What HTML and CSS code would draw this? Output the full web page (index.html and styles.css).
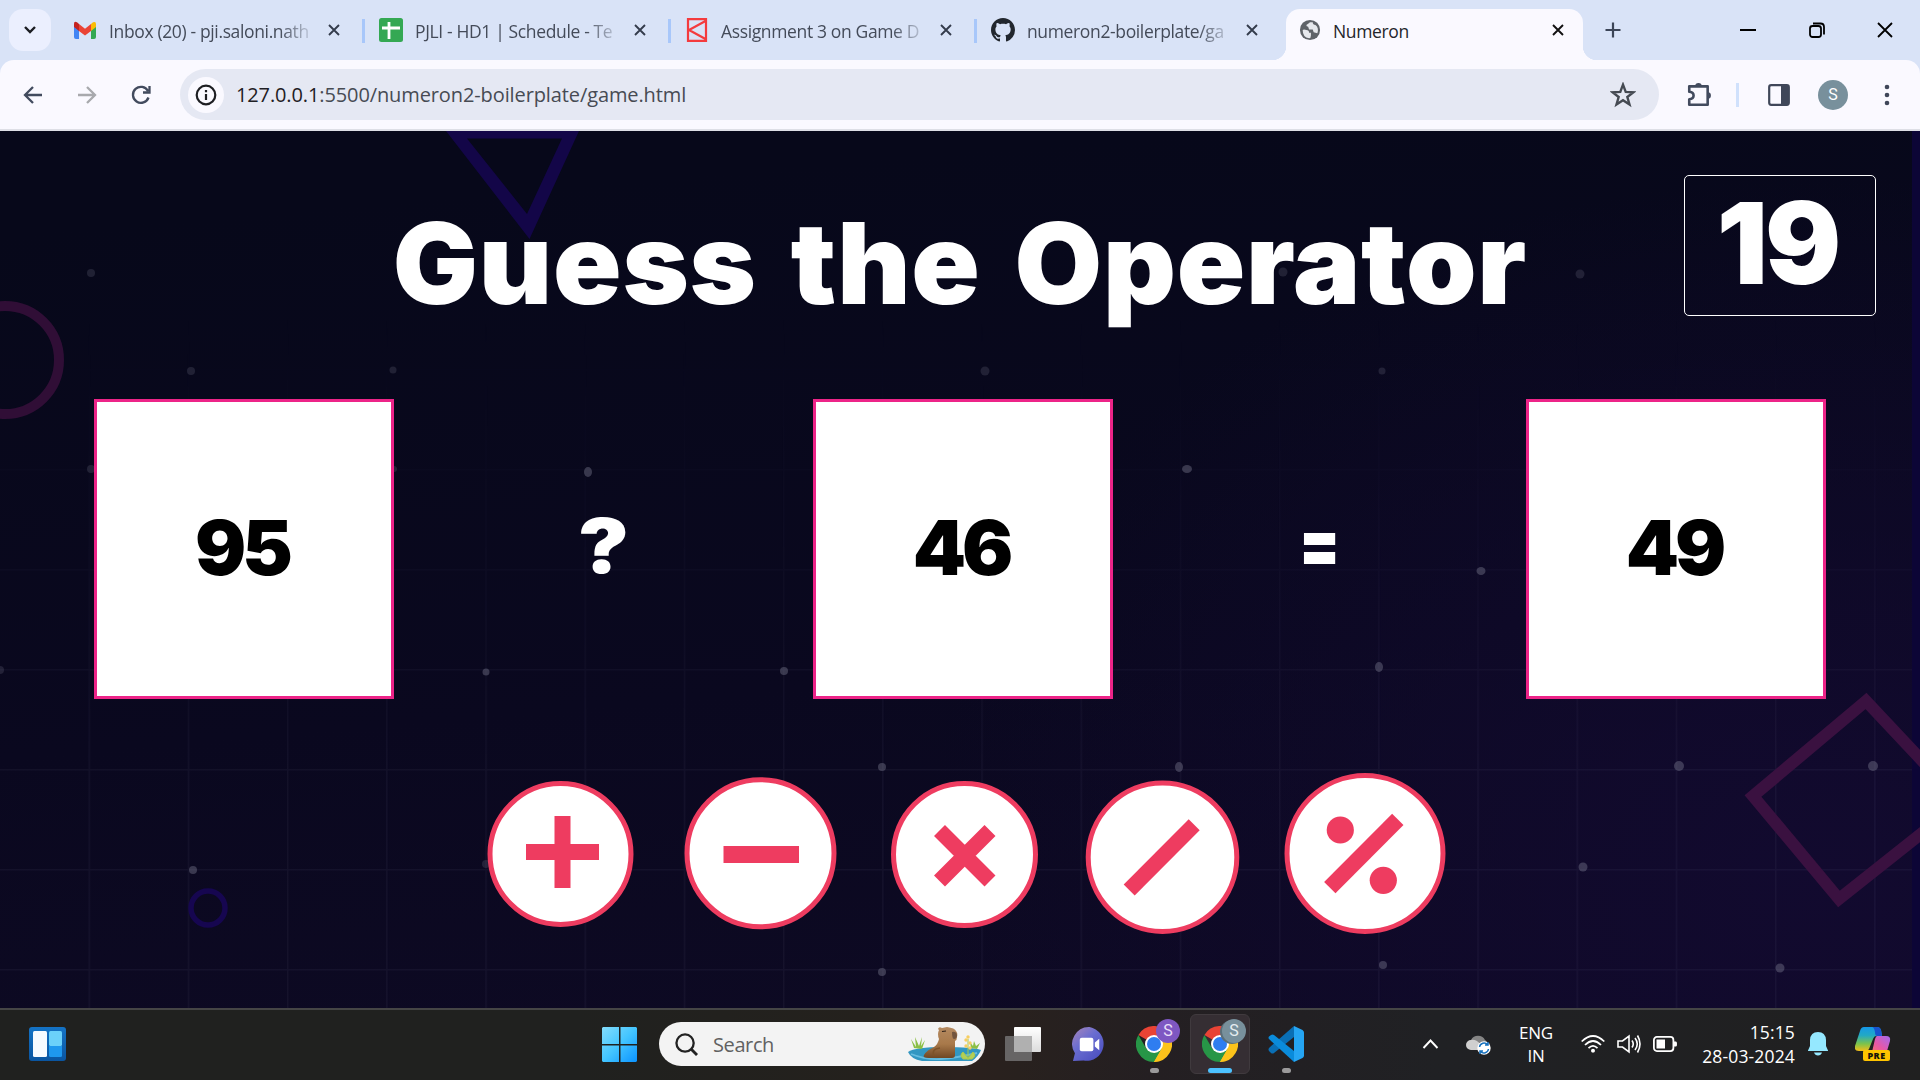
FILE: index.html
```html
<!DOCTYPE html>
<html lang="en">
<head>
<meta charset="utf-8">
<title>Numeron</title>
<link rel="stylesheet" href="styles.css">
</head>
<body>
<div class="screen">
  <header class="tabstrip">
    <button class="tab-search"><svg width="14" height="10" viewBox="0 0 14 10"><path d="M2 2l5 5 5-5" fill="none" stroke="#1b1d22" stroke-width="2.4"/></svg></button>
    <nav class="tabs">
      <div class="tab">
        <svg class="favicon" viewBox="0 0 24 24"><path d="M1 6v13q0 2 2 2h3V10z" fill="#4285f4"/><path d="M23 6v13q0 2-2 2h-3V10z" fill="#34a853"/><path d="M18 6l2-1.700q3-1.300 3 2V9l-5 4z" fill="#fbbc04"/><path d="M1 6q0-3.300 3-1.700L6 6v7L1 9z" fill="#c5221f"/><path d="M6 6l6 4.700L18 6v7l-6 4.500L6 13z" fill="#ea4335"/></svg>
        <span class="tab-title">Inbox (20) - pji.saloni.nath</span><svg class="close" viewBox="0 0 12 12"><path d="M1 1l10 10M11 1L1 11"/></svg>
      </div>
      <div class="tab">
        <svg class="favicon" viewBox="0 0 24 24"><rect width="24" height="24" rx="2.500" fill="#34a853"/><path d="M10 4v17M3 10h18" stroke="#fff" stroke-width="2.800"/></svg>
        <span class="tab-title">PJLI - HD1 | Schedule - Te</span><svg class="close" viewBox="0 0 12 12"><path d="M1 1l10 10M11 1L1 11"/></svg>
      </div>
      <div class="tab">
        <svg class="favicon" viewBox="0 0 24 24"><path d="M3 1.200h18v21.600H3zM20.500 3L4 12l16.500 9" fill="none" stroke="#f43b3e" stroke-width="2.200"/></svg>
        <span class="tab-title">Assignment 3 on Game D</span><svg class="close" viewBox="0 0 12 12"><path d="M1 1l10 10M11 1L1 11"/></svg>
      </div>
      <div class="tab last-idle">
        <svg class="favicon" viewBox="0 0 16 16"><path fill="#22272e" d="M8 0C3.580 0 0 3.580 0 8c0 3.540 2.290 6.530 5.470 7.590.4.070.55-.17.55-.38 0-.19-.01-.82-.01-1.490-2.010.37-2.530-.49-2.690-.94-.09-.23-.48-.94-.82-1.130-.28-.15-.68-.52-.01-.53.63-.01 1.080.58 1.230.82.72 1.210 1.870.87 2.330.66.070-.52.28-.87.51-1.070-1.780-.2-3.640-.89-3.640-3.950 0-.87.31-1.590.82-2.150-.08-.2-.36-1.020.08-2.120 0 0 .67-.21 2.200.82.64-.18 1.320-.27 2-.27s1.360.09 2 .27c1.530-1.040 2.200-.82 2.200-.82.44 1.100.16 1.920.08 2.120.51.56.82 1.270.82 2.150 0 3.070-1.870 3.750-3.650 3.950.29.25.54.73.54 1.480 0 1.070-.01 1.930-.01 2.200 0 .21.15.46.55.38A8.010 8.010 0 0 0 16 8c0-4.420-3.580-8-8-8z"/></svg>
        <span class="tab-title">numeron2-boilerplate/ga</span><svg class="close" viewBox="0 0 12 12"><path d="M1 1l10 10M11 1L1 11"/></svg>
      </div>
      <div class="tab active">
        <svg class="favicon globe" viewBox="0 0 24 24"><circle cx="12" cy="12" r="11" fill="#5f6368"/><path d="M4 12q1-1 4 0 3 0 3 3h2v3q0 3-2 3Q4 20 4 12zM12 3.500q-2 2-4 3 0 2 2 2l1 3h4l1 3 4 1q2-6-2-9-3 0-3-3z" fill="#e6e8ec"/></svg>
        <span class="tab-title">Numeron</span><svg class="close" viewBox="0 0 12 12"><path d="M1 1l10 10M11 1L1 11"/></svg>
      </div>
    </nav>
    <svg class="plus" viewBox="0 0 16 16"><path d="M8 .5v15M.5 8h15" stroke="#3c4557" stroke-width="2.200"/></svg>
    <div class="window-controls">
      <svg viewBox="0 0 16 16"><path d="M0 8h16" stroke="#000" stroke-width="2"/></svg>
      <svg viewBox="0 0 16 16" fill="none" stroke="#000" stroke-width="1.800"><rect x="1" y="4" width="11" height="11" rx="2.500"/><path d="M4 1.500h7.500Q15 1.500 15 5v7.500"/></svg>
      <svg viewBox="0 0 16 16"><path d="M1 1l14 14M15 1L1 15" stroke="#000" stroke-width="1.800"/></svg>
    </div>
  </header>

  <div class="toolbar">
    <div class="nav-buttons">
      <svg viewBox="0 0 20 20" fill="none" stroke="#424b5e" stroke-width="2.300"><path d="M19 10H2M10 2l-8 8 8 8"/></svg>
      <svg viewBox="0 0 20 20" fill="none" stroke="#a8a9ad" stroke-width="2.300"><path d="M1 10h17M10 2l8 8-8 8"/></svg>
      <svg viewBox="0 0 20 20" fill="none" stroke="#424b5e" stroke-width="2.300"><path d="M17.500 12.500A8 8 0 1 1 17 6M18.500 1v6.500H12"/></svg>
    </div>
    <div class="omnibox">
      <span class="site-info"><svg viewBox="0 0 22 22"><circle cx="11" cy="11" r="9.300" fill="none" stroke="#1d1e22" stroke-width="2.200"/><path d="M11 10v6M11 6v2.200" stroke="#1d1e22" stroke-width="2.200"/></svg></span>
      <span class="url"><b>127.0.0.1</b>:5500/numeron2-boilerplate/game.html</span>
      <svg class="star" viewBox="0 0 24 24"><path d="M12 2.500l2.500 6.700 7.200.3-5.700 4.400 2 6.900-6-4-6 4 2-6.900L2.300 9.500l7.200-.3z" fill="none" stroke="#454a52" stroke-width="2.200"/></svg>
    </div>
    <div class="actions">
      <svg class="puzzle" viewBox="0 0 24 24"><path d="M3 4h17v17H3v-5q4-.5 4-3.500T3 9z" fill="none" stroke="#424b5e" stroke-width="2.400" stroke-linejoin="round"/><path d="M8.500 4a3 3 0 0 1 6 0zM20 9.500a3 3 0 0 1 0 6z" fill="#424b5e"/></svg>
      <i class="divider"></i>
      <svg class="panel" viewBox="0 0 22 22"><rect x="1.200" y="1.200" width="19.600" height="19.600" rx="2" fill="none" stroke="#3f4759" stroke-width="2.200"/><path d="M13 1h7v20h-7z" fill="#3f4759"/></svg>
      <span class="profile">S</span>
      <svg class="dots" viewBox="0 0 6 22" fill="#3f4759"><circle cx="3" cy="3" r="2.300"/><circle cx="3" cy="11" r="2.300"/><circle cx="3" cy="19" r="2.300"/></svg>
    </div>
  </div>

  <main class="game">
    <svg class="backdrop" viewBox="0 131 1920 877">
      <defs>
        <pattern id="grid" x="88.500" y="169" width="99.200" height="100" patternUnits="userSpaceOnUse"><path d="M0 .5h99.200M.5 0v100" stroke="#8d8fb8" stroke-opacity=".07" stroke-width="2"/></pattern>
        <linearGradient id="fade" x1="0" y1="0" x2="0" y2="1"><stop offset=".2" stop-color="#000"/><stop offset=".75" stop-color="#fff"/></linearGradient>
        <mask id="gridmask"><rect y="131" width="1920" height="877" fill="url(#fade)"/></mask>
      </defs>
      <rect y="131" width="1912" height="877" fill="url(#grid)" mask="url(#gridmask)"/>
      <path d="M1912 131h8v877h-8z" fill="#0c0536"/>
      <path d="M446 131L579 131 529.500 239zM467 138.500h95L527 214z" fill="#130648" fill-rule="evenodd"/>
      <circle cx="5" cy="360" r="54" fill="none" stroke="#300e36" stroke-width="10"/>
      <circle cx="208" cy="908" r="17" fill="none" stroke="#160650" stroke-width="5.500"/>
      <path d="M1866 701L1753 796l86 103 122-97z" fill="none" stroke="#3a1140" stroke-width="12"/>
      <g fill="#85869a">
        <g opacity=".2"><circle cx="91" cy="273" r="4"/><circle cx="191" cy="371" r="4"/><circle cx="393" cy="370" r="3.500"/><circle cx="1283" cy="272" r="4.500"/><circle cx="1580" cy="274" r="4.500"/><circle cx="1382" cy="371" r="3.500"/><circle cx="985" cy="371" r="4.500"/><circle cx="91" cy="469" r="4"/><circle cx="394" cy="469" r="3"/><circle cx="486" cy="864" r="4"/><circle cx="0" cy="670" r="4"/></g>
        <g opacity=".38"><ellipse cx="588" cy="472" rx="4" ry="5"/><ellipse cx="1187" cy="469" rx="5" ry="4"/><ellipse cx="1481" cy="571" rx="4.500" ry="4"/><ellipse cx="1379" cy="667" rx="4" ry="5"/><circle cx="784" cy="671" r="4"/><circle cx="486" cy="672" r="3.500"/><circle cx="882" cy="767" r="4"/><ellipse cx="1179" cy="767" rx="4" ry="5"/><circle cx="1679" cy="766" r="5"/><circle cx="1873" cy="766" r="5"/><circle cx="1583" cy="867" r="4.500"/><circle cx="193" cy="870" r="4"/><circle cx="882" cy="972" r="4"/><circle cx="1383" cy="965" r="4"/><circle cx="1780" cy="968" r="4.500"/></g>
      </g>
    </svg>
    <h1>Guess the Operator</h1>
    <div class="timer">19</div>
    <section class="equation">
      <div class="number">95</div><div class="sign question">?</div><div class="number">46</div><div class="sign equals">=</div><div class="number">49</div>
    </section>
    <section class="operators">
      <svg width="180" height="180" viewBox="480 765 180 180"><circle cx="560.500" cy="854" r="70.500"/><path d="M526 852h73M562.500 816v72" stroke-width="16"/></svg>
      <svg width="205" height="180" viewBox="660 765 205 180"><circle cx="760.500" cy="853.300" r="73.500"/><path d="M723.500 854.500H799" stroke-width="17"/></svg>
      <svg width="195" height="180" viewBox="865 765 195 180"><circle cx="964.500" cy="854.500" r="71"/><path d="M939.500 830.500L990 881M990 830.500L939.500 881" stroke-width="15.500"/></svg>
      <svg width="202" height="180" viewBox="1060 765 202 180"><circle cx="1162.500" cy="857.200" r="74.300"/><path d="M1129.200 890l65-65.200" stroke-width="15.500"/></svg>
      <svg width="198" height="180" viewBox="1262 765 198 180"><circle cx="1365" cy="853.500" r="78"/><path d="M1329.800 887.700l68-68.400" stroke-width="16"/><g class="dot"><circle cx="1340.300" cy="830" r="13.600"/><circle cx="1383.300" cy="880.300" r="13.600"/></g></svg>
    </section>
  </main>

  <footer class="taskbar">
    <svg class="widgets" viewBox="0 0 37 34"><defs><linearGradient id="wg" x1="0" y1="0" x2="0" y2="1"><stop stop-color="#1473c5"/><stop offset="1" stop-color="#0a55a0"/></linearGradient></defs><rect width="37" height="34" rx="3" fill="url(#wg)"/><rect x="4" y="4" width="14" height="26" rx="1.500" fill="#f7fbff"/><rect x="20" y="4" width="13" height="15" rx="1.500" fill="#6bd1fa"/><path d="M20 19h13v9.500q0 1.500-1.500 1.500h-10q-1.500 0-1.500-1.500z" fill="#1e98ee"/></svg>
    <div class="apps">
      <svg class="start" viewBox="0 0 35 35"><defs><linearGradient id="win" x1="0" y1="0" x2="1" y2="1"><stop stop-color="#83dcfb"/><stop offset=".5" stop-color="#43c5ff"/><stop offset="1" stop-color="#0b93ff"/></linearGradient></defs><path d="M1 0h16v17H0V1zM18.500 0H34l1 1v16H18.500zM0 18.500h17V35H1l-1-1zM18.500 18.500H35V34l-1 1H18.500z" fill="url(#win)"/></svg>
      <div class="search">
        <svg class="lens" viewBox="0 0 24 24"><circle cx="10.500" cy="10.500" r="9" fill="none" stroke="#222" stroke-width="2.400"/><path d="M17 17l6 6" stroke="#222" stroke-width="3"/></svg>
        <span>Search</span>
        <svg class="capybara" viewBox="0 0 74 36"><defs><linearGradient id="fur" x1="0" y1="0" x2="0" y2="1"><stop stop-color="#b58a61"/><stop offset=".55" stop-color="#a8794a"/><stop offset="1" stop-color="#704724"/></linearGradient></defs><path d="M0 26Q7 21 36 21t37 3q-3 7-9 11H14Q3 33 0 26z" fill="#3297c2"/><path d="M3 28q15 6 30 5t36-6" fill="none" stroke="#66bcdf" stroke-width="1.800"/><path d="M6 22L3 13l5 8-1-10 4 9 3-9-1 9 4-6-3 9zM63 22l-1-6 3 4 1-5 2 5 4-3-3 6z" fill="#8bbf45"/><path d="M30 3q1-3 4-1l5-1q8 1 9 4 2 2 1 6 0 3-2 4v14q0 3-3 3H21q-7 0-5-3 3-5 10-8 4-3 5-8-2-5 0-9z" fill="url(#fur)"/><path d="M44 6q4-1 5 3 0 4-3 4-2 0-2-7z" fill="#72543e"/><path d="M34 5.500l4-.5" stroke="#2d2018" stroke-width="1.200"/><path d="M26 30q-3-7 6-8" fill="none" stroke="#7d5328" stroke-width="1.500"/><path d="M60 34V13M55 33q-4-4 0-7l5 6 5-6q4 4-1 7z" fill="#b5cf55" stroke="#a5c84e"/><g fill="#f7ce60"><circle cx="58" cy="14" r="1.700"/><circle cx="60" cy="11" r="1.700"/><circle cx="62" cy="17" r="1.700"/><circle cx="58" cy="20" r="1.700"/><circle cx="62" cy="22" r="1.700"/></g></svg>
      </div>
      <svg class="app taskview" viewBox="0 0 36 34"><defs><linearGradient id="tv" x1="0" y1="0" x2="0" y2="1"><stop stop-color="#fff"/><stop offset="1" stop-color="#dcdcdc"/></linearGradient></defs><rect x="9" width="27" height="25" rx="1" fill="url(#tv)"/><rect y="9" width="27" height="25" rx="1" fill="#777" fill-opacity=".8"/><path d="M9 9h18v16H9z" fill="#b0b0b0"/></svg>
      <svg class="app chat" viewBox="0 0 36 36"><defs><linearGradient id="ch" x1="0" y1="0" x2=".8" y2="1"><stop stop-color="#a886b9"/><stop offset=".45" stop-color="#6a6dd0"/><stop offset="1" stop-color="#4b4fc1"/></linearGradient></defs><path d="M18 0a17.500 17.500 0 1 1-6 34.500L1 35l2-8A17.500 17.500 0 0 1 18 0z" fill="url(#ch)"/><rect x="8" y="11" width="14" height="14" rx="2" fill="#fff"/><path d="M23.500 16l4.500-4v12l-4.500-4z" fill="#fff"/></svg>
      <div class="task violet">
        <svg class="chrome" viewBox="0 0 36 36"><path d="M18 18L2.400 9A18 18 0 0 1 33.600 9z" fill="#e94335"/><path d="M18 18L33.600 9A18 18 0 0 1 18 36z" fill="#fcc31b"/><path d="M18 18L18 9H33.600z" fill="#e94335"/><path d="M18 36A18 18 0 0 1 2.400 9L10.200 22.500 18 27l7.800-4.500z" fill="#279647"/><path d="M25.800 13.500H34A18 18 0 0 1 18 36l7.800-13.500z" fill="#fcc31b"/><circle cx="18" cy="18" r="9" fill="#fff"/><circle cx="18" cy="18" r="7" fill="#2f7df0"/></svg>
        <span class="badge">S</span><i></i>
      </div>
      <div class="task current">
        <svg class="chrome" viewBox="0 0 36 36"><path d="M18 18L2.400 9A18 18 0 0 1 33.600 9z" fill="#e94335"/><path d="M18 18L33.600 9A18 18 0 0 1 18 36z" fill="#fcc31b"/><path d="M18 18L18 9H33.600z" fill="#e94335"/><path d="M18 36A18 18 0 0 1 2.400 9L10.200 22.500 18 27l7.800-4.500z" fill="#279647"/><path d="M25.800 13.500H34A18 18 0 0 1 18 36l7.800-13.500z" fill="#fcc31b"/><circle cx="18" cy="18" r="9" fill="#fff"/><circle cx="18" cy="18" r="7" fill="#2f7df0"/></svg>
        <span class="badge">S</span><i></i>
      </div>
      <div class="task">
        <svg class="chrome" viewBox="0 0 36 36"><path d="M26 0v11L6 27q-1.500 1-3 0l-2-2q-1-1.500 0-3z" fill="#0a6fb5"/><path d="M1 13q-1-1.500 0-2.500l2-1.500q1.500-1 3 0l20 16v11z" fill="#0a8bdb"/><path d="M26 0l8.500 4Q36 5 36 6.500v23q0 1.500-1.500 2.500L26 36z" fill="#25a5f3"/></svg>
        <i></i>
      </div>
    </div>
    <div class="tray">
      <svg class="up" viewBox="0 0 16 10"><path d="M1 9l7-7.500L15 9" fill="none" stroke="#fff" stroke-width="1.900"/></svg>
      <svg class="cloud" viewBox="0 0 25 21"><path d="M6 16a5.500 5.500 0 0 1-1-10A8 8 0 0 1 19 6q3 1 2 10z" fill="#858585"/><path d="M5 16a5 5 0 0 1 0-10q5-1 9 4l2 6z" fill="#cfcfcf"/><circle cx="18" cy="14" r="6.700" fill="#fff"/><path d="M13.500 13a4.700 4.700 0 0 1 8-2.500M22.500 15a4.700 4.700 0 0 1-8 2.500M22 8v3h-3M14 20v-3h3" fill="none" stroke="#1670bd" stroke-width="1.500"/></svg>
      <div class="lang"><span>ENG</span><span>IN</span></div>
      <div class="status">
      <svg viewBox="0 0 24 18" fill="none" stroke="#fff" stroke-width="1.700"><path d="M.7 6.500q11.300-11 22.600 0M4 10q8-8 16 0M7.500 13.200q4.500-4.500 9 0"/><circle cx="12" cy="15.700" r="1.600" fill="#fff" stroke="none"/><circle cx="12" cy="15.700" r="1"/></svg>
      <svg viewBox="0 0 24 20" fill="none" stroke="#fff" stroke-width="1.600"><path d="M1 7v6h4.500L12 18V2L5.500 7zM15 6.500q2.500 3.500 0 7M18 4q4.500 6 0 12M20.500 1.500q5 8.500 0 17"/></svg>
      <svg viewBox="0 0 24 16"><rect x=".9" y=".9" width="19.500" height="14.200" rx="3" fill="none" stroke="#fff" stroke-width="1.800"/><rect x="3.500" y="3.500" width="8.500" height="9" fill="#fff"/><path d="M21 5.500h2q1 0 1 2.500t-1 2.500h-2z" fill="#fff"/></svg>
      </div>
      <div class="clock"><span>15:15</span><span>28-03-2024</span></div>
      <svg class="bell" viewBox="0 0 20 24"><path d="M10 0q7.500 0 8 8v6l2 4.500v.5H0v-.5L2 14V8q.5-8 8-8zM6 20.500h8q-1 3-4 3t-4-3z" fill="#95e8ff"/></svg>
      <div class="copilot">
        <svg viewBox="0 0 36 34"><defs><linearGradient id="ca" x1="0" y1="0" x2="0" y2="1"><stop stop-color="#1597e8"/><stop offset=".35" stop-color="#22a9c4"/><stop offset=".7" stop-color="#7cc34b"/><stop offset="1" stop-color="#f4bd18"/></linearGradient><linearGradient id="cb" x1="1" y1="0" x2="0" y2="1"><stop stop-color="#a36bf0"/><stop offset=".5" stop-color="#e658a8"/><stop offset="1" stop-color="#ff7c55"/></linearGradient></defs><path d="M9 0h13q3 0 4 3l1 6h-6q-2 0-3 3l-4 10q-1 2-3 2H4q-5 0-4-5L5 4q1-4 4-4z" fill="url(#ca)"/><path d="M17 0h5q3 0 4 3l1 6h-5q-2 0-2-4-1-5-3-5z" fill="#1853ce"/><path d="M22 9h9q5 0 4 5l-3 10q-1 4-5 4H13q3 0 4-3l3-13q1-3 2-3z" fill="url(#cb)"/></svg>
        <span>PRE</span>
      </div>
    </div>
  </footer>
</div>
</body>
</html>
```
FILE: styles.css
```css
* { box-sizing: border-box; }
body { margin: 0; font-family: "Open Sans", "Noto Sans", sans-serif; overflow: hidden; }
svg { display: block; flex: none; }
.screen { width: 1920px; height: 1080px; display: flex; flex-direction: column; overflow: hidden; background: #d9e3f7; }

.tabstrip { height: 60px; display: flex; align-items: center; padding-left: 9px; flex: none; }
.tab-search { width: 42px; height: 42px; border: 0; border-radius: 14px; background: #ebeffe; display: grid; place-items: center; padding: 0; margin-right: 8px; }
.tabs { display: flex; height: 60px; }
.tab { width: 306px; height: 60px; display: flex; align-items: center; padding: 0 0 0 14px; background: linear-gradient(#a8c7fa, #a8c7fa) 303px 19px / 3px 24px no-repeat; }
.tab.last-idle { background: none; }
.favicon { width: 24px; height: 24px; margin-right: 12px; }
.tab-title { width: 203px; margin-right: 16px; white-space: nowrap; font-size: 17.500px; letter-spacing: -.36px; color: #444b59; padding-top: 2px; -webkit-mask-image: linear-gradient(90deg, #000 84%, rgba(0,0,0,.12) 100%); }
.close { width: 12px; height: 12px; fill: none; stroke: #343c4c; stroke-width: 1.900; }
.tab.active { position: relative; width: 297px; height: 51px; margin: 9px 0 0 3px; border-radius: 14px 14px 0 0; background: #faf9ff; padding: 0 0 9px 13px; }
.tab.active::before, .tab.active::after { content: ""; position: absolute; bottom: 0; width: 14px; height: 14px; }
.tab.active::before { left: -14px; background: radial-gradient(circle at 0 0, transparent 14px, #faf9ff 14.500px); }
.tab.active::after { right: -14px; background: radial-gradient(circle at 100% 0, transparent 14px, #faf9ff 14.500px); }
.active .tab-title { color: #24262b; width: 206px; margin-right: 13px; -webkit-mask-image: none; }
.active .close { stroke: #111; }
.globe { width: 22px; height: 22px; }
.plus { width: 16px; height: 16px; margin-left: 22px; }
.window-controls { display: flex; gap: 52.500px; margin-left: auto; padding-right: 27px; }
.window-controls svg { width: 16px; height: 16px; }

.toolbar { height: 71px; flex: none; background: #faf9ff; border-bottom: 2px solid #dedfe6; border-radius: 14px 14px 0 0; display: flex; align-items: center; padding: 0 30px 0 23px; }
.nav-buttons { display: flex; gap: 34px; width: 157px; }
.nav-buttons svg { width: 20px; height: 20px; }
.omnibox { width: 1480px; height: 51px; border-radius: 26px; background: #e5e8f3; display: flex; align-items: center; padding: 0 23px 0 8px; }
.site-info { width: 36px; height: 36px; border-radius: 50%; background: #faf9ff; display: grid; place-items: center; }
.site-info svg { width: 22px; height: 22px; }
.url { flex: 1; font-size: 20px; letter-spacing: -.11px; color: #474b53; padding-left: 12px; }
.url b { font-weight: 400; color: #1f2024; }
.star { width: 26px; height: 26px; }
.actions { display: flex; align-items: center; flex: 1; padding-left: 27px; }
.puzzle { width: 26px; height: 26px; }
.divider { width: 3px; height: 24px; background: #d0e1fc; margin: 0 29px 0 24px; }
.panel { width: 22px; height: 22px; }
.profile { width: 30px; height: 30px; border-radius: 50%; background: #78909c; color: #fff; font: 16px/30px Roboto, sans-serif; text-align: center; margin: 0 36px 0 28px; }
.dots { width: 6px; height: 22px; }

.game { position: relative; height: 877px; flex: none; overflow: hidden; background: radial-gradient(ellipse 900px 700px at 95% 85%, #120a2f, transparent), linear-gradient(175deg, #07081a 10%, #0a081f 60%, #0e0a24 100%); font-family: Inter, "Open Sans", sans-serif; font-weight: 900; }
.backdrop { position: absolute; inset: 0; width: 1920px; height: 877px; }
h1 { position: relative; margin: 0; padding-top: 64px; height: 268px; text-align: center; color: #fff; font-size: 113px; line-height: 136px; letter-spacing: .8px; word-spacing: 10.500px; font-weight: 900; white-space: nowrap; }
.timer { position: absolute; right: 44px; top: 44px; width: 192px; height: 141px; border: 1px solid #fff; border-radius: 5px; color: #fff; font-size: 113px; line-height: 135px; text-align: center; letter-spacing: -3px; padding-right: 5px; }
.equation { position: relative; display: grid; grid-template-columns: 300px 419px 300px 413px 300px; padding-left: 94px; height: 300px; align-items: center; font-size: 76px; text-align: center; }
.number { height: 300px; line-height: 291px; background: #fff; border: 3px solid #ed2488; color: #000; letter-spacing: -4px; padding-right: 4px; }
.sign { color: #fff; line-height: 293px; height: 300px; }
.question { transform: scaleX(1.12); }
.equals { transform: scaleX(.78); line-height: 289px; }
.operators { position: relative; display: flex; margin: 66px 0 0 480px; }
.operators svg { fill: none; stroke: #ee3c60; }
.operators circle { fill: #fff; stroke-width: 5px; }
.operators .dot circle { fill: #ee3c60; stroke: none; }

.taskbar { height: 72px; flex: none; background: linear-gradient(90deg, #20211f 0 30%, #24211d 45%, #2b211e 50%, #28211e 53%, #241f22 60%, #202124 75%, #202020); border-top: 2px solid #454545; display: flex; align-items: center; padding: 0 29px 2px; color: #fff; }
.widgets { width: 37px; height: 34px; margin-right: 536px; }
.apps { display: flex; align-items: center; }
.start { width: 35px; height: 35px; margin-right: 22px; }
.search { width: 326px; height: 44px; border-radius: 22px; background: #f3f3f3; display: flex; align-items: center; padding: 0 3px 0 16px; color: #616161; font-size: 20px; }
.search span { margin-left: 15px; flex: 1; letter-spacing: -.4px; }
.lens { width: 23px; height: 23px; }
.capybara { width: 74px; height: 36px; }
.taskview { width: 36px; height: 34px; margin: 0 31px 0 20px; }
.chat { width: 35px; height: 35px; margin-right: 17px; }
.task { position: relative; width: 60px; height: 60px; border-radius: 6px; margin-right: 6px; padding: 11px 11px; border: 1px solid transparent; }
.task.current { background: #352e33; border-color: #403a3e; }
.chrome { width: 36px; height: 36px; }
.task i { position: absolute; bottom: 0; left: 25px; width: 9px; height: 5px; border-radius: 3px; background: #9b9a9b; }
.task.current i { left: 17px; width: 24px; background: #4cc2ff; }
.badge { position: absolute; left: 31px; top: 4px; width: 24px; height: 24px; border-radius: 50%; background: #7e57c2; color: #e9def8; font: 16px/24px Roboto, sans-serif; text-align: center; }
.current .badge { background: #78909c; color: #e5edf0; box-shadow: -2px 1px 0 #5a6f7a; }
.tray { display: flex; align-items: center; margin-left: auto; }
.up { width: 17px; height: 10px; margin-right: 27px; }
.cloud { width: 25px; height: 21px; margin-right: 27px; }
.lang { width: 36px; display: flex; flex-direction: column; align-items: center; font-size: 17px; line-height: 23px; margin-right: 27px; letter-spacing: -.2px; }
.status { display: flex; align-items: center; gap: 12px; }
.status svg { width: 24px; }
.clock { width: 118px; display: flex; flex-direction: column; align-items: flex-end; font-size: 17.500px; line-height: 24px; margin-right: 13px; letter-spacing: .15px; }
.bell { width: 20px; height: 24px; margin-right: 27px; }
.copilot { position: relative; width: 36px; height: 34px; }
.copilot span { position: absolute; left: 8px; bottom: 0; width: 27px; height: 11px; background: #ffc400; color: #17150a; border-radius: 2px; font-size: 9px; line-height: 11px; font-weight: 800; letter-spacing: .5px; text-align: center; }
```
